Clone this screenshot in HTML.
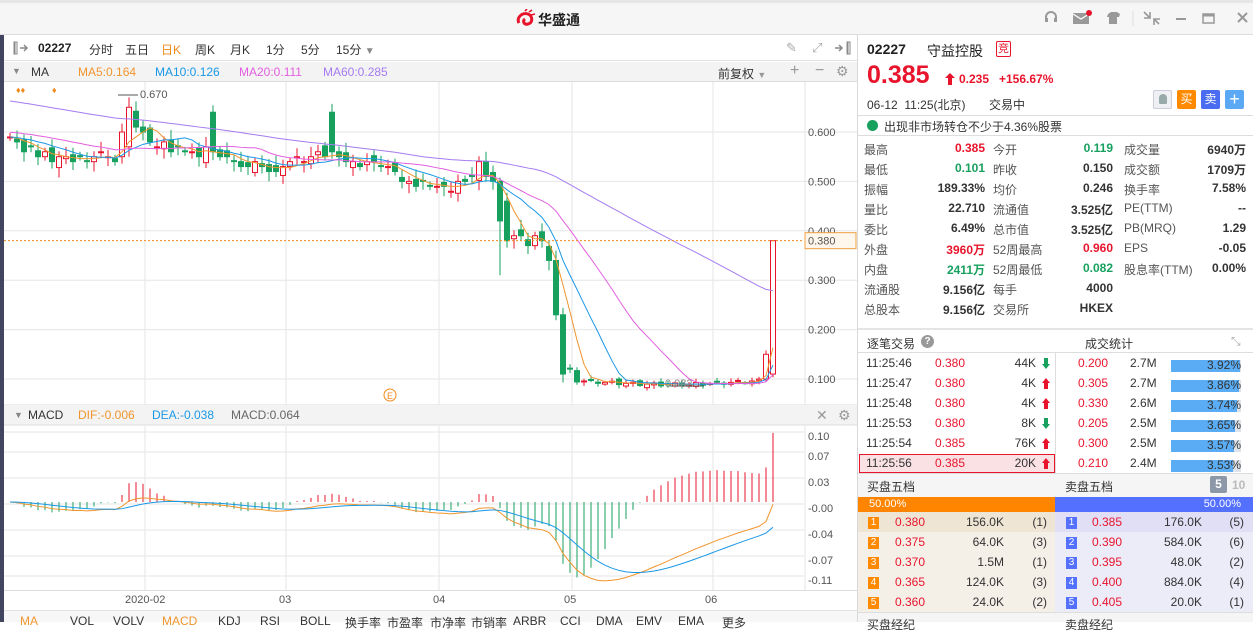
<!DOCTYPE html>
<html><head><meta charset="utf-8"><style>
*{margin:0;padding:0;box-sizing:border-box}
body{width:1253px;height:622px;overflow:hidden;background:#fff;font-family:"Liberation Sans","Noto Sans CJK SC",sans-serif;font-size:12px;color:#333;position:relative}
.a{position:absolute;white-space:nowrap}
.r{color:#e8142c}.g{color:#17a05e}.b{font-weight:bold}
.rt{text-align:right}
</style></head><body>
<div class="a" style="left:0;top:0;width:1253px;height:35px;background:#f6f6f6;border-top:3px solid #e6e6e6;border-bottom:1px solid #dcdcdc"></div>
<div class="a" style="left:516px;top:9px;width:20px;height:18px">
<svg width="20" height="18" viewBox="0 0 20 18"><path d="M3 14c-3-5 3-11 9-9 5 2 5 9 0 10-4 1-6-3-3-5" fill="none" stroke="#e8142c" stroke-width="3"/><path d="M9 2l2-2M13 3l3-2M15 6l4-1" stroke="#e8142c" stroke-width="1.6"/></svg></div>
<div class="a b" style="left:538px;top:10px;font-size:14px;color:#222">华盛通</div>
<svg class="a" style="left:1040px;top:8px" width="213" height="20">
<path d="M6 12v-3a5 5 0 0 1 10 0v3" fill="none" stroke="#999" stroke-width="2"/><rect x="5" y="10" width="3" height="4" fill="#999"/><rect x="14" y="10" width="3" height="4" fill="#999"/>
<rect x="33" y="5" width="16" height="11" fill="#999"/><path d="M33 6l8 5 8-5" fill="none" stroke="#fff" stroke-width="1.3"/><circle cx="49" cy="5" r="3" fill="#e8142c"/>
<path d="M68 6l3-2h6l3 2-1 3h-2v7h-8v-7h-2z" fill="#999"/>
<line x1="93" y1="3" x2="93" y2="18" stroke="#ddd"/>
<path d="M104 4l6 6M104 10h6V4M119 16l-5-5M114 17v-6h6" fill="none" stroke="#999" stroke-width="1.6"/>
<line x1="136" y1="11" x2="146" y2="11" stroke="#999" stroke-width="2"/>
<rect x="163" y="6" width="11" height="9" fill="none" stroke="#999" stroke-width="1.5"/><line x1="163" y1="7.5" x2="174" y2="7.5" stroke="#999" stroke-width="2"/>
<path d="M198 5l9 9M207 5l-9 9" stroke="#999" stroke-width="2"/></svg>

<div class="a" style="left:0;top:35px;width:4px;height:587px;background:#41455f"></div>
<div class="a" style="left:4px;top:35px;width:853px;height:26px;border-bottom:1px solid #e2e2e2"></div>
<svg class="a" style="left:13px;top:41px" width="20" height="14"><path d="M1 1h3v12H1zM2 1v12" fill="none" stroke="#888"/><path d="M7 7h6M11 4l3 3-3 3" fill="none" stroke="#888" stroke-width="1.5"/></svg>
<div class="a b" style="left:38px;top:41px;color:#222">02227</div>
<div class="a" style="left:89px;top:41px">分时</div>
<div class="a" style="left:125px;top:41px">五日</div>
<div class="a" style="left:161px;top:41px;color:#f08a1c">日K</div>
<div class="a" style="left:195px;top:41px">周K</div>
<div class="a" style="left:230px;top:41px">月K</div>
<div class="a" style="left:266px;top:41px">1分</div>
<div class="a" style="left:301px;top:41px">5分</div>
<div class="a" style="left:336px;top:41px">15分 <span style="color:#888;font-size:10px">▼</span></div>
<div class="a" style="left:786px;top:40px;color:#aaa;font-size:13px">✎</div>
<div class="a" style="left:812px;top:40px;color:#aaa;font-size:13px">⤢</div>
<svg class="a" style="left:834px;top:41px" width="20" height="14"><path d="M1 7h6M5 4l3 3-3 3" fill="none" stroke="#888" stroke-width="1.5"/><path d="M13 1h3v12h-3zM14 1v12" fill="none" stroke="#888"/></svg>
<div class="a" style="left:4px;top:62px;width:853px;height:20px;background:#f3f3f3;border-bottom:1px solid #ddd"></div>
<div class="a" style="left:12px;top:66px;color:#888;font-size:9px">▼</div>
<div class="a" style="left:31px;top:65px">MA</div>
<div class="a" style="left:78px;top:65px;color:#f0952e">MA5:0.164</div>
<div class="a" style="left:155px;top:65px;color:#1a98e6">MA10:0.126</div>
<div class="a" style="left:239px;top:65px;color:#e35ee0">MA20:0.111</div>
<div class="a" style="left:323px;top:65px;color:#a57bf0">MA60:0.285</div>
<div class="a" style="left:718px;top:65px">前复权 <span style="color:#999;font-size:9px">▼</span></div>
<div class="a" style="left:790px;top:62px;color:#999;font-size:16px">+</div>
<div class="a" style="left:815px;top:62px;color:#999;font-size:16px">−</div>
<div class="a" style="left:836px;top:63px;color:#999;font-size:14px">⚙</div>

<svg class="a" id="main" style="left:4px;top:82px" width="853" height="540"></svg>

<div class="a" style="left:857px;top:35px;width:1px;height:587px;background:#d8d8d8"></div>
<div class="a b" style="left:867px;top:41px;font-size:14px;color:#222">02227</div>
<div class="a" style="left:927px;top:41px;font-size:14px;color:#222">守益控股</div>
<div class="a" style="left:996px;top:41px;width:15px;height:16px;border:1px solid #e8142c;border-radius:2px;color:#e8142c;font-size:11px;text-align:center;line-height:14px">竞</div>
<div class="a b r" style="left:867px;top:61px;font-size:25px">0.385</div>
<svg class="a" style="left:945px;top:73px" width="10" height="12"><path d="M5 0l5 5H7v7H3V5H0z" fill="#e8142c"/></svg>
<div class="a b r" style="left:959px;top:72px;font-size:12px">0.235</div>
<div class="a b r" style="left:999px;top:72px;font-size:12px">+156.67%</div>
<div class="a" style="left:867px;top:96px">06-12 &nbsp;11:25(北京)</div>
<div class="a" style="left:989px;top:96px">交易中</div>
<div class="a" style="left:1153px;top:90px;width:19px;height:19px;background:#eef0f3;border:1px solid #ccd;border-radius:2px"></div>
<div class="a" style="left:1159px;top:94px;width:8px;height:10px;background:#9aa;border-radius:4px 4px 1px 1px"></div>
<div class="a" style="left:1177px;top:90px;width:19px;height:19px;background:#ff8a00;color:#fff;text-align:center;line-height:19px;border-radius:2px">买</div>
<div class="a" style="left:1201px;top:90px;width:19px;height:19px;background:#4a6cf0;color:#fff;text-align:center;line-height:19px;border-radius:2px">卖</div>
<div class="a" style="left:1225px;top:90px;width:19px;height:19px;background:#5ba8f5;color:#fff;text-align:center;line-height:18px;border-radius:2px;font-size:18px">+</div>
<div class="a" style="left:858px;top:115px;width:395px;height:1px;background:#ddd"></div>
<div class="a" style="left:867px;top:120px;width:11px;height:11px;border-radius:50%;background:#17a05e"></div>
<div class="a" style="left:884px;top:118px">出现非市场转仓不少于4.36%股票</div>
<div class="a" style="left:858px;top:135px;width:395px;height:1px;background:#ddd"></div>
<div class="a" style="left:858px;top:328px;width:395px;height:2px;background:#e4e4e4"></div>
<div class="a" style="left:867px;top:335px">逐笔交易</div>
<div class="a" style="left:921px;top:335px;width:13px;height:13px;border-radius:50%;background:#999;color:#fff;font-size:10px;text-align:center;line-height:13px;font-weight:bold">?</div>
<div class="a" style="left:1085px;top:335px">成交统计</div>
<div class="a" style="left:1231px;top:334px;color:#aaa;font-size:12px">⤡</div>
<div class="a" style="left:858px;top:352px;width:395px;height:1px;background:#ddd"></div>
<div class="a" style="left:1055px;top:352px;width:1px;height:121px;background:#ddd"></div>
<div class="a" style="left:859px;top:454px;width:196px;height:19px;background:#f9e1e4;border:1px solid #e8142c"></div>
<div class="a" style="left:858px;top:473px;width:395px;height:24px;background:#f5f5f5;border-top:1px solid #ddd"></div>
<div class="a" style="left:867px;top:478px">买盘五档</div>
<div class="a" style="left:1065px;top:478px">卖盘五档</div>
<div class="a b" style="left:1210px;top:476px;width:17px;height:17px;background:#8c97a8;color:#fff;text-align:center;line-height:17px;border-radius:2px">5</div>
<div class="a b" style="left:1232px;top:478px;color:#bbb">10</div>
<div class="a" style="left:858px;top:497px;width:197px;height:15px;background:#ff8400;color:#fff;font-size:11px;padding-left:11px;line-height:15px">50.00%</div>
<div class="a" style="left:1055px;top:497px;width:198px;height:15px;background:#5470ff;color:#fff;font-size:11px;text-align:right;padding-right:12px;line-height:15px">50.00%</div>
<div class="a" style="left:858px;top:512px;width:197px;height:100px;background:#f4efe7"></div>
<div class="a" style="left:858px;top:512px;width:197px;height:20px;background:#efe5d4"></div>
<div class="a" style="left:1055px;top:512px;width:198px;height:100px;background:#ecebf8"></div>
<div class="a" style="left:1055px;top:512px;width:198px;height:20px;background:#e1dff6"></div>
<div class="a" style="left:858px;top:612px;width:395px;height:10px;background:#f5f5f5;border-top:1px solid #ddd"></div>
<div class="a" style="left:867px;top:616px">买盘经纪</div>
<div class="a" style="left:1065px;top:616px">卖盘经纪</div>

<div class="a" style="left:4px;top:590px;width:853px;height:1px;background:#ddd"></div>
<div class="a" style="left:125px;top:594px;font-size:11px;color:#555">2020-02</div>
<div class="a" style="left:279px;top:594px;font-size:11px;color:#555">03</div>
<div class="a" style="left:433px;top:594px;font-size:11px;color:#555">04</div>
<div class="a" style="left:564px;top:594px;font-size:11px;color:#555">05</div>
<div class="a" style="left:705px;top:594px;font-size:11px;color:#555">06</div>
<div class="a" style="left:4px;top:610px;width:853px;height:12px;background:#f7f7f7;border-top:1px solid #e3e3e3"></div>

<script>
function el(h){document.body.insertAdjacentHTML('beforeend',h)}
var S=[["最高","0.385","r","今开","0.119","g","成交量","6940万",""],["最低","0.101","g","昨收","0.150","","成交额","1709万",""],["振幅","189.33%","","均价","0.246","","换手率","7.58%",""],["量比","22.710","","流通值","3.525亿","","PE(TTM)","--",""],["委比","6.49%","","总市值","3.525亿","","PB(MRQ)","1.29",""],["外盘","3960万","r","52周最高","0.960","r","EPS","-0.05",""],["内盘","2411万","g","52周最低","0.082","g","股息率(TTM)","0.00%",""],["流通股","9.156亿","","每手","4000","","","",""],["总股本","9.156亿","","交易所","HKEX","","","",""]];
S.forEach(function(s,i){var y=141+i*20;
el('<div class="a" style="left:864px;top:'+y+'px;color:#555">'+s[0]+'</div><div class="a b rt '+s[2]+'" style="left:900px;width:85px;top:'+y+'px">'+s[1]+'</div>'+
'<div class="a" style="left:993px;top:'+y+'px;color:#555">'+s[3]+'</div><div class="a b rt '+s[5]+'" style="left:1030px;width:83px;top:'+y+'px">'+s[4]+'</div>'+
'<div class="a" style="left:1124px;top:'+y+'px;color:#555">'+s[6]+'</div><div class="a b rt" style="left:1170px;width:76px;top:'+y+'px">'+s[7]+'</div>')});
var T=[["11:25:46","0.380","44K",0,"0.200","2.7M","3.92%",69],["11:25:47","0.380","4K",1,"0.305","2.7M","3.86%",68],["11:25:48","0.380","4K",1,"0.330","2.6M","3.74%",66],["11:25:53","0.380","8K",0,"0.205","2.5M","3.65%",64],["11:25:54","0.385","76K",1,"0.300","2.5M","3.57%",63],["11:25:56","0.385","20K",1,"0.210","2.4M","3.53%",62]];
T.forEach(function(t,i){var y=356+i*20;
var ar=t[3]?'<path d="M4 0l4 5H6v6H2V5H0z" fill="#e8142c"/>':'<path d="M4 11l4-5H6V0H2v6H0z" fill="#17a05e"/>';
el('<div class="a" style="left:866px;top:'+y+'px">'+t[0]+'</div><div class="a r" style="left:935px;top:'+y+'px">'+t[1]+'</div><div class="a rt" style="left:990px;width:46px;top:'+y+'px">'+t[2]+'</div><svg class="a" style="left:1042px;top:'+(y+2)+'px" width="8" height="11">'+ar+'</svg>'+
'<div class="a r" style="left:1078px;top:'+y+'px">'+t[4]+'</div><div class="a" style="left:1130px;top:'+y+'px">'+t[5]+'</div>'+
'<div class="a" style="left:1171px;top:'+(y+4)+'px;width:70px;height:12px;background:#dde3ea"></div><div class="a" style="left:1171px;top:'+(y+4)+'px;width:'+t[7]+'px;height:12px;background:#5aadf5"></div><div class="a rt" style="left:1171px;width:70px;top:'+(y+2)+'px;color:#333">'+t[6]+'</div>')});
var B=[["0.380","156.0K","(1)","0.385","176.0K","(5)"],["0.375","64.0K","(3)","0.390","584.0K","(6)"],["0.370","1.5M","(1)","0.395","48.0K","(2)"],["0.365","124.0K","(3)","0.400","884.0K","(4)"],["0.360","24.0K","(2)","0.405","20.0K","(1)"]];
B.forEach(function(b,i){var y=515+i*20;
el('<div class="a" style="left:868px;top:'+(y+2)+'px;width:11px;height:12px;background:#ff8a00;color:#fff;font-size:10px;text-align:center;line-height:12px">'+(i+1)+'</div><div class="a r" style="left:895px;top:'+y+'px">'+b[0]+'</div><div class="a rt" style="left:950px;width:54px;top:'+y+'px">'+b[1]+'</div><div class="a rt" style="left:1020px;width:27px;top:'+y+'px">'+b[2]+'</div>'+
'<div class="a" style="left:1066px;top:'+(y+2)+'px;width:11px;height:12px;background:#5470ff;color:#fff;font-size:10px;text-align:center;line-height:12px">'+(i+1)+'</div><div class="a r" style="left:1092px;top:'+y+'px">'+b[3]+'</div><div class="a rt" style="left:1145px;width:57px;top:'+y+'px">'+b[4]+'</div><div class="a rt" style="left:1216px;width:28px;top:'+y+'px">'+b[5]+'</div>')});
var tb=[["MA",20,1],["VOL",70],["VOLV",113],["MACD",162,1],["KDJ",218],["RSI",260],["BOLL",300],["换手率",345],["市盈率",387],["市净率",430],["市销率",471],["ARBR",513],["CCI",560],["DMA",596],["EMV",636],["EMA",678],["更多",722]];
tb.forEach(function(t){el('<div class="a" style="left:'+t[1]+'px;top:614px;'+(t[2]?'color:#f0952e':'')+'">'+t[0]+'</div>')});

var C=[0.59,0.58,0.56,0.57,0.55,0.56,0.54,0.55,0.55,0.54,0.55,0.54,0.55,0.56,0.55,0.54,0.60,0.65,0.61,0.60,0.58,0.57,0.58,0.56,0.57,0.56,0.56,0.55,0.57,0.56,0.55,0.55,0.54,0.53,0.53,0.54,0.53,0.52,0.52,0.53,0.54,0.55,0.54,0.55,0.56,0.55,0.56,0.55,0.54,0.54,0.53,0.54,0.54,0.53,0.53,0.52,0.50,0.50,0.49,0.50,0.49,0.49,0.49,0.48,0.50,0.50,0.51,0.54,0.51,0.50,0.42,0.38,0.39,0.39,0.37,0.39,0.38,0.34,0.23,0.11,0.12];
var s;for(var k=81;k<108;k++){s=0.097-0.008*Math.sin((k-81)*0.12)+(k%3-1)*0.003;C.push(s)}C.push(0.15);C.push(0.38);
var sp={29:0.64,46:0.64,70:0.50,71:0.46,79:0.23,78:0.34,108:0.10,109:0.11,17:0.57,16:0.55};
var px=function(i){return 10+i*7.0-4}, py=function(p){return 132+(0.6-p)*494-82};
var svg='';
[145,286,439,572,713,805].forEach(function(x){svg+='<line x1="'+(x-4)+'" y1="0" x2="'+(x-4)+'" y2="323" stroke="#e6e6e6"/><line x1="'+(x-4)+'" y1="344" x2="'+(x-4)+'" y2="508" stroke="#e6e6e6"/>'});
[0.6,0.5,0.4,0.3,0.2,0.1].forEach(function(p){var y=py(p);svg+='<line x1="0" y1="'+y+'" x2="853" y2="'+y+'" stroke="#e6e6e6"/><text x="804" y="'+(y+4)+'" font-size="11" fill="#555">'+p.toFixed(3)+'</text>'});
svg+='<line x1="0" y1="323" x2="853" y2="323" stroke="#ddd"/>';
for(var i=0;i<C.length;i++){var o=sp[i]!=null?sp[i]:(i?C[i-1]+((i*37)%7-3)*(i>80?0.0015:0.004):C[0]);var c=C[i];var f=i>80?0.4:1;var hi=Math.max(o,c)+(0.008+((i*13)%5)*0.003)*f,lo=Math.min(o,c)-(0.008-((i*7)%5)*-0.003)*f;
if(i==70)lo=0.31;if(i==17)hi=0.67;if(i==109)hi=0.38;
var up=c>=o,col=up?'#e8142c':'#17a05e',x=px(i);
svg+='<line x1="'+x+'" y1="'+py(hi)+'" x2="'+x+'" y2="'+py(lo)+'" stroke="'+col+'"/>';
var y1=py(Math.max(o,c)),h=Math.max(1,py(Math.min(o,c))-y1);
svg+='<rect x="'+(x-2.5)+'" y="'+y1+'" width="5" height="'+h+'" fill="'+(up?'#fff':col)+'" stroke="'+col+'" stroke-width="1"/>';}
function ma(n,pre){var r=[];for(var i=0;i<C.length;i++){var t=0;for(var j=i-n+1;j<=i;j++)t+=j>=0?C[j]:pre;r.push(t/n)}return r}
function poly(a,col,f){var p=a.map(function(v,i){return px(i)+','+f(v)}).join(' ');return '<polyline points="'+p+'" fill="none" stroke="'+col+'" stroke-width="1"/>'}
var m60=[];for(var i=0;i<C.length;i++){var t=0;for(var j=i-59;j<=i;j++)t+=j>=0?C[j]:0.70-0.0012*(j+60);m60.push(t/60)}
svg+=poly(ma(5,0.59),'#f0952e',py)+poly(ma(10,0.59),'#1a98e6',py)+poly(ma(20,0.60),'#e35ee0',py)+poly(m60,'#a57bf0',py);
svg+='<line x1="0" y1="'+py(0.38)+'" x2="800" y2="'+py(0.38)+'" stroke="#f08a1c" stroke-dasharray="2,2"/><rect x="801" y="'+(py(0.38)-8)+'" width="51" height="16" fill="#fff6ec" stroke="#f0a040"/><text x="804" y="'+(py(0.38)+4)+'" font-size="11" fill="#555">0.380</text>';
svg+='<line x1="114" y1="13" x2="134" y2="13" stroke="#555"/><text x="136" y="16" font-size="11" fill="#555">0.670</text>';
svg+='<line x1="665" y1="304" x2="700" y2="304" stroke="#555"/><text x="661" y="305" font-size="11" fill="#888">0.082</text>';
svg+='<text x="12" y="11" font-size="9" fill="#f08a1c">♦♦</text><text x="48" y="11" font-size="9" fill="#f08a1c">♦</text>';
svg+='<circle cx="386" cy="313" r="6" fill="none" stroke="#f08a1c"/><text x="383" y="317" font-size="9" fill="#f08a1c">E</text>';
svg+='<rect x="0" y="323" width="853" height="20" fill="#f3f3f3"/><line x1="0" y1="343" x2="853" y2="343" stroke="#ddd"/>';
svg+='<text x="10" y="336" font-size="9" fill="#888">▼</text><text x="24" y="337" font-size="12" fill="#333">MACD</text><text x="74" y="337" font-size="12" fill="#f0952e">DIF:-0.006</text><text x="148" y="337" font-size="12" fill="#1a98e6">DEA:-0.038</text><text x="227" y="337" font-size="12" fill="#666">MACD:0.064</text><text x="812" y="338" font-size="14" fill="#999">✕</text><text x="834" y="338" font-size="14" fill="#999">⚙</text>';
[[0.10,436],[0.07,456],[0.03,482],[-0.00,508],[-0.04,534],[-0.07,560],[-0.11,580]].forEach(function(a){svg+='<line x1="0" y1="'+(a[1]-82-4)+'" x2="800" y2="'+(a[1]-82-4)+'" stroke="#e6e6e6"/><text x="804" y="'+(a[1]-82+4)+'" font-size="11" fill="#555">'+(a[0]<=0?'-':'')+Math.abs(a[0]).toFixed(2)+'</text>'});
var e12=C[0],e26=C[0],dea=0,dif=[],de=[];for(var i=0;i<C.length;i++){e12=e12*11/13+C[i]*2/13;e26=e26*25/27+C[i]*2/27;var d=e12-e26;dea=dea*0.8+d*0.2;dif.push(d);de.push(dea)}
var z=420,sc=720,my=function(v){return z+(-v)*sc};
for(var i=1;i<C.length;i++){var h=(dif[i]-de[i])*3;var x=px(i);svg+='<line x1="'+x+'" y1="'+z+'" x2="'+x+'" y2="'+my(h)+'" stroke="'+(h>=0?'#e8142c':'#17a05e')+'"/>'}
svg+=poly(dif,'#f0952e',my)+poly(de,'#1a98e6',my);
document.getElementById('main').innerHTML=svg;
</script>
</body></html>
